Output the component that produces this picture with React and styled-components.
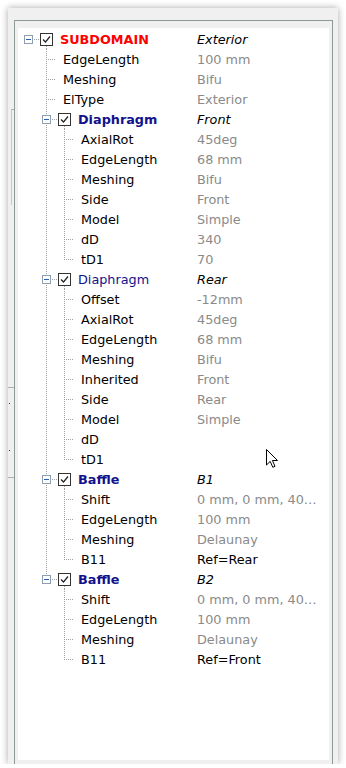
import React from "react";
import styled, { createGlobalStyle } from "styled-components";

const GlobalStyle = createGlobalStyle`
  html, body { margin: 0; padding: 0; background: #ffffff; }
  body { font-family: "DejaVu Sans", Verdana, sans-serif; }
`;

const Window = styled.div`
  position: relative;
  margin: 8px 0 0 8px;
  width: 330px;
  height: 756px;
  background: #f0f0f0;
  box-shadow: 0 0 7px rgba(0, 0, 0, 0.35);
  display: flex;
`;

const SideStrip = styled.div`
  flex: 0 0 6px;
  display: flex;
  flex-direction: column;
`;

const StripMark = styled.div`
  flex: none;
  margin-top: ${(p) => p.$gap}px;
  margin-left: ${(p) => p.$x || 0}px;
  width: ${(p) => p.$w}px;
  height: ${(p) => p.$h}px;
  box-sizing: border-box;
  border-top: ${(p) => (p.$cap ? "1px solid #a9b1b1" : "none")};
  border-left: ${(p) => (p.$line ? "1px solid #c4c9c9" : "none")};
  background: ${(p) => p.$fill || "transparent"};
`;

const Frame = styled.div`
  flex: 1;
  margin: 12px 5px 0 0;
  border: 1px solid #8e9a99;
  border-bottom: none;
  padding: 7px 3px 4px 3px;
  display: flex;
`;

const Panel = styled.div`
  flex: 1;
  background: #ffffff;
  padding: 1px 0 0 1px;
`;

const Row = styled.div`
  display: grid;
  grid-template-columns: 178px 124px;
  height: 20px;
  align-items: center;
  font-size: 12.8px;
  color: #000;
`;

const TreeCell = styled.div`
  display: flex;
  align-items: center;
  height: 100%;
  min-width: 0;
  white-space: nowrap;
`;

const Guide = styled.span`
  position: relative;
  flex: 0 0 18px;
  align-self: stretch;
`;

const VLine = styled.span`
  position: absolute;
  left: 9px;
  top: 0;
  width: 1px;
  height: ${(p) => (p.$half ? "10px" : "100%")};
  background: repeating-linear-gradient(to bottom, #a0a0a0 0 1px, transparent 1px 2px);
`;

const HTick = styled.span`
  position: absolute;
  left: 9px;
  top: 10px;
  height: 1px;
  width: ${(p) => p.$w}px;
  background: repeating-linear-gradient(to right, #a0a0a0 0 1px, transparent 1px 2px);
`;

const Expander = styled.span`
  position: absolute;
  left: 5px;
  top: 6px;
  width: 9px;
  height: 9px;
  box-sizing: border-box;
  border: 1px solid #8e9eae;
  background: #ffffff;
  z-index: 1;
  &::after {
    content: "";
    position: absolute;
    left: 1px;
    top: 3px;
    width: 5px;
    height: 1px;
    background: #2a5db4;
  }
`;

const CheckBox = styled.span`
  position: relative;
  flex: none;
  align-self: flex-start;
  margin: 4px 0 0 3px;
  width: 13px;
  height: 13px;
  box-sizing: border-box;
  border: 1px solid #333333;
  background: #ffffff;
  display: flex;
  svg { display: block; }
  &::after {
    content: ${(p) => (p.$open ? '""' : "none")};
    position: absolute;
    left: 5px;
    top: 12px;
    width: 1px;
    height: 3px;
    background: repeating-linear-gradient(to bottom, #a0a0a0 0 1px, transparent 1px 2px);
  }
`;

const NodeLabel = styled.span`
  margin-left: 7px;
  font-weight: ${(p) => (p.$bold ? 700 : 400)};
  color: ${(p) => (p.$tone === "red" ? "#ff0000" : "#12128c")};
`;

const LeafLabel = styled.span`
  margin-left: 8px;
  color: #000000;
`;

const ValueCell = styled.span`
  overflow: hidden;
  text-overflow: ellipsis;
  white-space: nowrap;
  font-style: ${(p) => (p.$variant === "italic" ? "italic" : "normal")};
  color: ${(p) => (p.$variant === "dim" ? "#8a8a8a" : "#000000")};
`;

const Cursor = styled.svg`
  position: absolute;
  left: 257px;
  top: 440px;
  pointer-events: none;
`;

const leaf = (name, value, variant = "dim") => ({ name, value, variant });

const tree = {
  name: "SUBDOMAIN",
  value: "Exterior",
  tone: "red",
  bold: true,
  children: [
    leaf("EdgeLength", "100 mm"),
    leaf("Meshing", "Bifu"),
    leaf("ElType", "Exterior"),
    {
      name: "Diaphragm",
      value: "Front",
      bold: true,
      children: [
        leaf("AxialRot", "45deg"),
        leaf("EdgeLength", "68 mm"),
        leaf("Meshing", "Bifu"),
        leaf("Side", "Front"),
        leaf("Model", "Simple"),
        leaf("dD", "340"),
        leaf("tD1", "70"),
      ],
    },
    {
      name: "Diaphragm",
      value: "Rear",
      bold: false,
      children: [
        leaf("Offset", "-12mm"),
        leaf("AxialRot", "45deg"),
        leaf("EdgeLength", "68 mm"),
        leaf("Meshing", "Bifu"),
        leaf("Inherited", "Front"),
        leaf("Side", "Rear"),
        leaf("Model", "Simple"),
        leaf("dD", ""),
        leaf("tD1", ""),
      ],
    },
    {
      name: "Baffle",
      value: "B1",
      bold: true,
      children: [
        leaf("Shift", "0 mm, 0 mm, 400 mm"),
        leaf("EdgeLength", "100 mm"),
        leaf("Meshing", "Delaunay"),
        leaf("B11", "Ref=Rear", "plain"),
      ],
    },
    {
      name: "Baffle",
      value: "B2",
      bold: true,
      children: [
        leaf("Shift", "0 mm, 0 mm, 400 mm"),
        leaf("EdgeLength", "100 mm"),
        leaf("Meshing", "Delaunay"),
        leaf("B11", "Ref=Front", "plain"),
      ],
    },
  ],
};

function flatten(node, level, isLast, anc, out) {
  out.push({ node, level, isLast, anc });
  if (node.children) {
    node.children.forEach((c, i) =>
      flatten(c, level + 1, i === node.children.length - 1, [...anc, !isLast], out)
    );
  }
  return out;
}

const rows = flatten(tree, 0, true, [], []);

const Check = () => (
  <svg width="11" height="11" viewBox="0 0 11 11">
    <path d="M2 5.5 L4.5 8 L9 2.5" fill="none" stroke="#222" strokeWidth="1.2" />
  </svg>
);

function TreeRow({ node, level, isLast, anc }) {
  const branch = !!node.children;
  const guides = [];
  for (let k = 0; k < level; k++) {
    guides.push(<Guide key={k}>{k >= 1 && anc[k] ? <VLine /> : null}</Guide>);
  }
  return (
    <Row>
      <TreeCell>
        {guides}
        <Guide>
          {level >= 1 && <VLine $half={isLast} />}
          <HTick $w={branch ? 12 : 9} />
          {branch && <Expander />}
        </Guide>
        {branch ? (
          <>
            <CheckBox $open>
              <Check />
            </CheckBox>
            <NodeLabel $tone={node.tone} $bold={node.bold}>
              {node.name}
            </NodeLabel>
          </>
        ) : (
          <LeafLabel>{node.name}</LeafLabel>
        )}
      </TreeCell>
      <ValueCell $variant={branch ? "italic" : node.variant}>{node.value}</ValueCell>
    </Row>
  );
}

export default function App() {
  return (
    <>
      <GlobalStyle />
      <Window>
        <SideStrip>
          <StripMark $gap={101} $x={3} $w={3} $h={96} $cap $line />
          <StripMark $gap={182} $x={0} $w={6} $h={3} $cap />
          <StripMark $gap={13} $x={1} $w={1} $h={1} $fill="#1a2a6a" />
          <StripMark $gap={46} $x={1} $w={1} $h={1} $fill="#1a2a6a" />
          <StripMark $gap={26} $x={0} $w={6} $h={1} $cap />
        </SideStrip>
        <Frame>
          <Panel>
            {rows.map((r, i) => (
              <TreeRow key={i} {...r} />
            ))}
          </Panel>
        </Frame>
        <Cursor width="14" height="21" viewBox="0 0 14 21">
          <path
            d="M1.5 1.5 L1.5 17 L5.2 13.4 L7.8 19.3 L10 18.3 L7.4 12.5 L12.5 12.5 Z"
            fill="#fff"
            stroke="#000"
            strokeWidth="1"
            strokeLinejoin="round"
          />
        </Cursor>
      </Window>
    </>
  );
}
